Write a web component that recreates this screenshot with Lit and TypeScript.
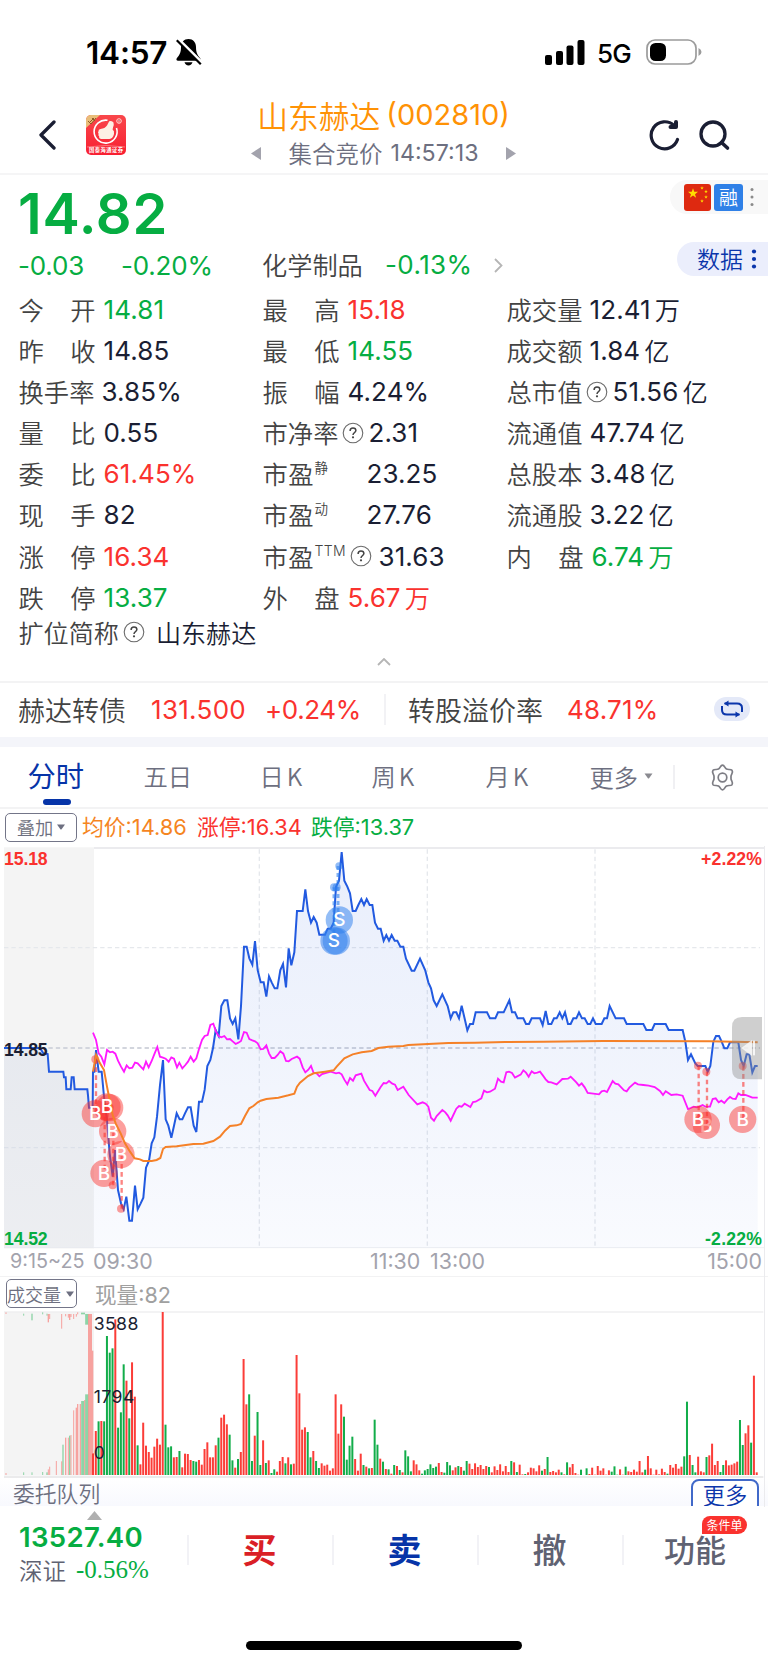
import { LitElement, html, svg, css, nothing } from 'lit';
import { customElement } from 'lit/decorators.js';

type Tone = 'ink' | 'up' | 'down';
interface Stat {
  label: string;
  value: string;
  tone?: Tone;
  unit?: string;
  sup?: string;
  help?: boolean;
}

const TIMES = ['09:30', '11:30', '13:00', '15:00'];

const STATS: (Stat | null)[] = [
  { label: '今开', value: '14.81', tone: 'down' },
  { label: '最高', value: '15.18', tone: 'up' },
  { label: '成交量', value: '12.41', unit: '万' },
  { label: '昨收', value: '14.85' },
  { label: '最低', value: '14.55', tone: 'down' },
  { label: '成交额', value: '1.84', unit: '亿' },
  { label: '换手率', value: '3.85%' },
  { label: '振幅', value: '4.24%' },
  { label: '总市值', value: '51.56', unit: '亿', help: true },
  { label: '量比', value: '0.55' },
  { label: '市净率', value: '2.31', help: true },
  { label: '流通值', value: '47.74', unit: '亿' },
  { label: '委比', value: '61.45%', tone: 'up' },
  { label: '市盈', sup: '静', value: '23.25' },
  { label: '总股本', value: '3.48', unit: '亿' },
  { label: '现手', value: '82' },
  { label: '市盈', sup: '动', value: '27.76' },
  { label: '流通股', value: '3.22', unit: '亿' },
  { label: '涨停', value: '16.34', tone: 'up' },
  { label: '市盈', sup: 'TTM', value: '31.63', help: true },
  { label: '内盘', value: '6.74', unit: '万', tone: 'down' },
  { label: '跌停', value: '13.37', tone: 'down' },
  { label: '外盘', value: '5.67', unit: '万', tone: 'up' },
  null,
];

/* Chart series, in thirds of a pixel. Each segment carries its own x origin. */
const shift = (dx: number, s: string) =>
  s.trim().split(/\s+/).map((p) => {
    const [x, y] = p.split(',').map(Number);
    return `${x + dx},${y}`;
  }).join(' ');

const AUCTION = '12,624 120,624 130,640 143,642 147,695 190,695 192,712 197,712 199,748 212,748 215,712 221,712 224,748 262,748 264,766 267,803 278,803';
const PRICE = [
  shift(0, '279,695 283,695 288,630 296,695 305,695 313,780 321,840 329,940 338,1010 345,930 354,1050 363,1090 371,1108 379,1070 388,1142 396,1142 405,1037 413,1108 422,1090 430,1073 438,983 447,962 455,910 463,892 471,830 480,735 489,660 497,838 505,857 514,893 522,857 530,820 539,838 547,838 555,820 564,802 572,802 581,857 589,876 597,785 606,785 614,749 622,678 631,660 639,624 647,570 656,588 664,498 673,481 682,481 690,535 698,552 706,535 715,598 723,498 732,320 740,320 748,355 757,374'),
  shift(765, '0,303 8,390 17,427 26,427 34,470 42,409 50,427 59,445 67,445 76,390 84,372 93,442 101,325 109,376 118,337 126,213 143,213 151,148 159,213 168,248 176,231 185,248 193,284 210,284 218,266 227,266 236,248 243,140 252,122 260,36 268,122 277,140 285,160 293,213 302,213 310,195 319,177 327,195 335,177 344,195 352,195 360,248 369,266 377,266 386,302 394,285 402,302 410,285 419,302 427,302 436,320 445,320 453,356 470,392 478,392 495,356 511,392 520,427 528,445 536,481 545,498 562,463 578,498 587,535 595,517 604,517 612,535 620,497 637,571 645,552 654,552 662,517 696,517 705,535 721,535 729,517 746,517 763,481'),
  shift(1530, '6,517 15,517 23,535 40,535 48,552 57,552 65,535 90,535 98,555 107,513 115,552 124,552 132,535 140,535 149,517 157,535 165,517 174,552 182,552 190,535 199,535 207,517 216,535 224,535 233,552 241,552 249,535 257,552 275,552 283,535 291,535 299,498 317,535 342,535 350,552 400,552 409,570 426,570 434,552 467,552 476,570 518,570 526,605 534,660 543,643 556,670 563,678 586,678 593,695 601,678 610,605 618,588 627,588 635,605 643,625 652,625 660,607 685,607 693,660 701,678 710,643 718,643 727,697 735,678 743,678'),
].join(' ');
const AVERAGE = [
  shift(0, '279,695 288,645 300,670 312,690 321,740 329,780 338,825 347,850 362,880 375,910 390,935 404,955 420,958 430,963 455,963 470,960 481,954 489,927 497,921 530,919 580,912 610,911 640,903 660,890 675,872 690,858 710,856 723,852 735,828 748,805 760,798'),
  shift(765, '8,787 17,782 34,777 70,773 100,766 118,761 126,740 135,728 159,708 176,700 210,695 236,691 245,680 268,655 293,643 320,637 350,633 370,624 400,620 445,618 460,615 520,612 580,609 660,608 750,606'),
  shift(1530, '100,605 280,603 600,604 743,607'),
].join(' ');
const INDEX = [
  shift(0, '279,578 288,600 296,640 304,650 313,673 321,630 330,637 338,635 346,641 354,662 363,680 372,695 380,676 388,685 397,683 405,668 413,670 422,680 430,688 438,665 446,682 455,663 464,640 472,621 480,650 489,653 497,656 506,665 514,652 522,656 531,682 538,668 547,685 556,675 564,665 572,650 581,665 589,655 597,627 606,600 614,588 623,585 631,555 640,551 648,575 656,588 664,592 673,588 681,598 690,597 698,604 707,612 715,608 723,603 732,576 740,578 748,597 757,601 765,604 773,610'),
  shift(765, '17,628 25,627 34,616 42,640 50,654 59,654 68,645 76,634 85,641 93,663 101,664 110,657 126,650 134,656 143,682 151,697 160,689 168,678 176,699 185,700 193,709 201,702 227,695 243,700 252,698 260,703 268,719 277,733 285,714 294,722 302,706 319,701 327,722 344,750 352,753 361,767 377,741 386,729 394,730 402,723 412,731 420,734 428,750 445,740 461,765 487,793 503,787 512,791 520,800 528,833 537,842 545,828 562,810 571,817 578,826 587,842 595,825 604,806 612,798 620,800 629,791 646,801 654,786 662,785 679,775 687,752 696,757 705,755 720,746 729,716 738,725 746,727 754,697 762,695'),
  shift(1530, '6,699 15,713 32,704 40,691 48,698 56,710 65,694 73,700 82,698 90,695 99,707 107,718 115,726 124,727 140,733 157,717 174,716 182,710 199,727 207,737 215,730 224,742 233,759 267,763 275,754 283,752 291,756 308,723 316,731 325,733 342,751 350,754 358,743 375,728 384,733 400,735 416,737 434,741 450,753 459,765 467,754 484,765 500,763 518,767 534,807 542,804 551,800 560,802 568,800 578,795 586,800 600,800 608,777 617,775 626,787 634,782 643,789 652,778 660,771 668,776 677,777 685,760 693,765 706,765 718,769 727,773 743,773'),
].join(' ');

/* One entry per minute: colour (r rise, g fall) and bar top. */
const VOLUME = `r550 r483 g454 r453 g454 g198 g248 g235 r148 g473 g427 g283 r332 g445 r277 r380 g526 r583 r458 r527 r546 r563 r530 r506 r524 r126
g464 g532 g529 r562 r561 g543 r592 r551 r552 r570 g573 g575 r570 r584 r537 r517 r562 r562 r526 g503 r443 r434 r463 g494 g571 r593 g567 r546
r267 r403 g373 g573 r497 g426 g585 r511 g579 r571 g609 g598 r605 r573 r561 g580 r562 g583 r581 r255 r370 r479 r472 g486 g562 r543 g573 g594
r580 r587 r584 r602 r595 r373 r491 r403 g440 g569 g527 g500 r567 r602 r551 g585 r590 g595 r594 g449 g524 r566 g575 r597 g598 r611 g585 r588
g600 r607 g541 g559 g604 r571 r583 r601 g611 g601 g597 g583 g594 g590 r579 r606 g608 g576 g586 r601 r592 g588 r591 g602 g573 r581 r597 r580
r591 r585 r597 r588 g591 r607 r589 r600 r583 r604 r588 r606 g573 r577 g606 r584 r613 g612 r607 r593 r595 r604 r586 g602 r597 g561 r606 r603
r607 r599 g607 r613 g577 r592 r582 r609 r614 g599 r615 g595 r612 r593 r614 r588 r602 r595 r614 r601 g605 g589 g614 r598 r614 g590 r604 r606
r599 r605 r573 r607 g599 r558 r595 r614 r599 r613 r596 r606 g611 r585 r593 r582 r596 r590 g559 g395 r555 g585 g607 r560 r604 r607 g561 r556
r521 r585 r573 g606 g585 r571 r586 r584 r580 r575 g450 g525 r490 r466 g518 r317 r607`.trim().split(/\s+/);

/* Call auction bars: colour, x, top, bottom, width. */
const AUCTION_BARS: [string, number, number, number, number][] = [
  ['r', 18, 127, 132, 3], ['g', 71, 131, 137, 3], ['g', 96, 131, 151, 4], ['g', 128, 127, 133, 3], ['g', 141, 131, 137, 3],
  ['r', 145, 132, 157, 4], ['r', 149, 132, 147, 3], ['r', 185, 132, 176, 3], ['r', 197, 132, 139, 3], ['r', 205, 132, 143, 3],
  ['r', 209, 132, 150, 4], ['r', 213, 132, 141, 3], ['r', 221, 132, 147, 3], ['r', 229, 132, 140, 3], ['r', 233, 127, 133, 3],
  ['g', 249, 128, 133, 12], ['g', 260, 132, 164, 9], ['r', 270, 132, 615, 12], ['r', 278, 242, 550, 4],
  ['r', 18, 609, 615, 3], ['g', 71, 607, 615, 3], ['g', 96, 607, 615, 3], ['g', 128, 606, 615, 3], ['g', 141, 607, 615, 4],
  ['r', 145, 598, 615, 3], ['r', 149, 590, 615, 3], ['r', 169, 573, 615, 3], ['r', 185, 574, 615, 3], ['g', 189, 524, 615, 4],
  ['r', 197, 503, 615, 4], ['r', 205, 503, 615, 3], ['g', 209, 497, 615, 4], ['r', 213, 495, 615, 3], ['r', 221, 421, 615, 3],
  ['r', 229, 413, 615, 4], ['r', 233, 402, 615, 4], ['r', 241, 402, 615, 4], ['g', 248, 393, 615, 9], ['r', 254, 390, 615, 3],
  ['g', 260, 373, 615, 9],
];

/* Trades, bottom of the stack first: letter, x, marker y, anchor y. */
const TRADES: [string, number, number, number][] = [
  ['', 329, 803, 803], ['', 286, 821, 658], ['', 321, 801, 801], ['B', 338, 874, 1036],
  ['', 363, 944, 1106], ['', 312, 1000, 830],
  ['B', 2119, 856, 695], ['', 2094, 838, 677], ['', 2228, 838, 678],
];
/* Letters that stay above every marker. */
const LETTERS: [string, number, number][] = [
  ['B', 286, 821], ['B', 321, 801], ['B', 363, 944], ['B', 312, 1000], ['B', 2094, 838], ['B', 2228, 838],
];

@customElement('app-root')
export class AppRoot extends LitElement {
  static styles = css`
    :host { display: block; width: 768px; height: 1665px; overflow: hidden; background: #fff; color: #1a1e33;
      font-family: Inter, "Noto Sans CJK SC", sans-serif; font-size: 26px; white-space: nowrap; }
    * { box-sizing: border-box; }
    svg { display: block; flex: none; }
    .up { color: #fa322e; } .down { color: #06ad42; } .ink { color: #1a1e33; }
    .cjk { font-family: "Noto Sans CJK SC", sans-serif; font-weight: 350; }

    .status { height: 94px; display: flex; align-items: center; padding: 10px 66px 0 86px; color: #000; }
    .clock { font-size: 31.5px; font-weight: 600; letter-spacing: -0.2px; width: 90px; }
    .net { font-size: 26px; font-weight: 500; margin: 2px 14px 0 12px; letter-spacing: -0.8px; width: 35px; }
    .grow { flex: 1; }

    .head { height: 81px; display: grid; align-items: center; border-bottom: 2px solid #f5f5f6; padding-top: 2px; grid-template-columns: 39px 47px 40px 522px 51px 69px; }
    .title { display: flex; flex-direction: column; align-items: center; margin-left: -7px; }
    .name { color: #ff9205; font-size: 29px; line-height: 40px; margin-top: -5px; display: flex; gap: 6px; }
    .name .cjk { font-size: 30.8px; }
    .phase { color: #6d6f80; font-size: 23.2px; line-height: 32px; display: flex; align-items: center; gap: 8px; margin-top: 2px; }
    .phase .cjk { font-size: 23.5px; }
    .phase .prev { margin-right: 20px; } .phase .next { margin-left: 20px; }

    .summary { height: 508px; border-bottom: 2px solid #f3f3f4; }
    .quote { height: 114px; display: grid; grid-template-columns: 262px 415px 91px; }
    .last { font-size: 56px; font-weight: 600; line-height: 79px; padding-left: 18px; letter-spacing: 0.8px; }
    .moves { display: flex; padding-left: 18px; line-height: 32px; margin-top: -4px; gap: 37px; letter-spacing: -0.2px; }
    .sector { align-self: end; display: flex; line-height: 32px; padding-bottom: 8px; align-items: center; }
    .sector .cjk { font-size: 25.2px; color: #434343; width: 123px; margin-top: -3px; }
    .sector .down { letter-spacing: 0.4px; width: 109px; }
    .tools { display: flex; flex-direction: column; align-items: flex-end; }
    .flags { margin-top: 5px; width: 98px; height: 34px; border-radius: 17px 0 0 17px; background: #f8f8f8; display: flex; align-items: center; padding-left: 14px; gap: 3px; }
    .margin { width: 29px; height: 27px; border-radius: 3px; background: #2f80e7; color: #fff; font-size: 19px; line-height: 26px; text-align: center; }
    .flags .dots { margin-left: 3px; }
    .data { margin-top: 28px; width: 91px; height: 34px; border-radius: 17px 0 0 17px; background: #ebeefc; color: #0b36ab; font-size: 23px; display: flex; align-items: center; padding-left: 20px; gap: 8px; line-height: 31px; }
    .data span { margin-top: -2px; }

    .stats { display: grid; grid-template-columns: 244px 244px 1fr; grid-auto-rows: 41.1px; padding-left: 18.5px; }
    .stat { display: flex; align-items: center; height: 41px; }
    .label { font-size: 25.3px; color: #434343; display: flex; justify-content: space-between; margin-top: -1px; }
    .l2 { width: 77px; margin-right: 8px; } .l3 { width: 76px; margin-right: 7px; } .ls { width: 51px; }
    .sup { font-size: 13.5px; color: #434343; align-self: flex-start; line-height: 20px; margin: 4px 0 0 1px; width: 52px; }
    .ttm { width: 39px; font-family: Inter, sans-serif; font-size: 14px; letter-spacing: 0.4px; margin-top: 5px; }
    .val { letter-spacing: 0.1px; }
    .unit { font-size: 25.3px; margin-left: 4px; margin-top: -1px; }
    .help { margin: 0 5px 0 -4px; }
    .ttm + .help { margin-left: -4px; margin-right: 7px; }
    .alias { display: flex; align-items: center; height: 30px; padding-left: 18.5px; font-size: 25.1px; margin-top: -1px; }
    .alias .k { color: #434343; }
    .alias .help { margin: 0 11px 0 4px; }
    .fold { display: flex; justify-content: center; padding-top: 11px; }

    .bond { height: 54px; display: flex; align-items: center; padding: 0 0 2px 18px; font-size: 26px; }
    .bond .cjk { font-size: 27px; color: #434343; }
    .b1 { margin-left: 25px; width: 114px; letter-spacing: 0.3px; } .b2 { width: 119px; letter-spacing: -0.4px; }
    .bsep { width: 2px; height: 31px; background: #f2f2f5; margin-right: 22px; }
    .b3 { margin-left: 24px; width: 147px; letter-spacing: 0.2px; }
    .swap { width: 36px; height: 24px; border-radius: 12px; background: #e4e9f8; display: flex; align-items: center; justify-content: center; }
    .band { height: 10px; background: #f4f5fa; }

    .tabs { height: 62px; display: grid; grid-template-columns: 116px 116px 112px 114px 104px 83px 36px 1fr; align-items: center; border-bottom: 2px solid #f3f3f4; font-size: 24.3px; color: #6d6f80; padding-left: 27.5px; }
    .tab { height: 60px; line-height: 58px; }
    .on { color: #0634a8; font-size: 28.3px; font-weight: 400; display: flex; flex-direction: column; line-height: 56px; }
    .on::after { content: ""; width: 28px; height: 6px; border-radius: 3px; background: #0634a8; margin-top: -4px; margin-left: 15px; }
    .duo { display: flex; gap: 3px; }
    .more { display: flex; align-items: center; gap: 6px; padding-bottom: 2px; }
    .tsep { width: 2px; height: 24px; background: #f0f0f3; }

    .legend { height: 37px; display: flex; align-items: center; padding-left: 5px; font-size: 21.8px; padding-bottom: 1px; }
    .pick { border: 1.5px solid #737588; border-radius: 5px; height: 29px; width: 72px; display: flex; align-items: center; justify-content: center; gap: 4px; font-size: 18.3px; color: #6d6f80; line-height: 26px; }
    .legend .i1 { margin-left: 5px; width: 115px; color: #f5851f; } .legend .i2 { width: 114px; }
    .legend span:not(.pick) { margin-top: -3px; }
    .frame { position: relative; height: 661px; overflow: hidden; }
    .frame::after { content: ""; position: absolute; left: 763.5px; top: 0; width: 1.5px; height: 661px; background: #ebebee; }
    .axis { height: 27px; display: flex; padding: 0 6px 0 10px; font-size: 21.4px; line-height: 25px; color: #a3a3ad; }
    .axis .pre { font-size: 19.8px; width: 83px; }
    .axis .t0 { width: 277px; } .axis .t1 { width: 60px; } .axis .t3 { margin-left: auto; }
    .vbar { height: 35px; display: flex; align-items: center; padding-left: 6px; border-top: 1px solid #f2f2f3; }
    .vbar .pick { margin-top: -1px; justify-content: flex-start; gap: 5px; font-size: 18px; width: 71px; }
    .now { color: #a0a0a0; font-size: 21.6px; margin: -2px 0 0 18px; }
    .queue { height: 28px; overflow: hidden; display: flex; align-items: flex-start; justify-content: space-between; padding: 0 9px 0 13px; background: linear-gradient(#fff, #f8f9fe); color: #6d6f80; font-size: 21.8px; line-height: 30px; }
    .qmore { border: 2px solid #4169c9; border-radius: 8px; width: 68px; height: 34px; margin-top: 1px; text-align: center; color: #0b36ab; font-size: 22.3px; line-height: 26px; background: #fff; }

    .bar { height: 133px; display: grid; grid-template-columns: 188px 145px 145px 145px 1fr; margin-left: -1px; }
    .index { padding: 4px 0 0 20px; }
    .index svg { margin-left: 68px; }
    .points { font-size: 27.6px; font-weight: 600; line-height: 32px; letter-spacing: 0.3px; margin-top: 1px; }
    .sz { display: flex; align-items: center; font-size: 23.5px; color: #5f6272; line-height: 34px; gap: 10px; }
    .sz .pct { font-family: "Liberation Serif", serif; font-size: 25px; color: #06ad42; }
    .act { height: 90px; line-height: 83px; text-align: center; font-size: 34px; position: relative; }
    .act::before { content: ""; position: absolute; left: 0; top: 28px; width: 1.5px; height: 30px; background: #f2f2f6; }
    .buy { color: #da1f26; font-weight: 700; } .sell { color: #0634a8; font-weight: 700; } .gray { color: #5f6272; font-weight: 500; }
    .fn { font-size: 31px; }
    .badge { position: absolute; left: 80px; top: 9px; width: 45px; height: 18px; border-radius: 8px 9px 9px 0; background: #fa322e; color: #fff; font-size: 12px; line-height: 17px; font-weight: 400; }
    .home { height: 25px; display: flex; justify-content: center; padding-top: 1px; }
    .home i { width: 276px; height: 9px; border-radius: 5px; background: #000; }
  `;

  private help() {
    return html`<svg class="help" width="22" height="22" viewBox="0 0 22 22"><circle cx="11" cy="11" r="9.8" fill="none" stroke="#6a6a6a" stroke-width="1.1"/><path d="M8.1 9c0-1.8 1.2-3 2.9-3s2.9 1.100 2.900 2.600c0 2-2.900 2.200-2.900 4.300" fill="none" stroke="#434343" stroke-width="1.500"/><circle cx="11" cy="15.300" r="1.100" fill="#434343"/></svg>`;
  }
  private tri(c = '#6d6f80', w = 8) {
    return html`<svg width=${w} height="6" viewBox="0 0 8 6"><path d="M0 .5h8L4.600 5.200q-.600.600-1.200 0z" fill=${c}/></svg>`;
  }
  private dots(c: string, r: number) {
    return html`<svg class="dots" width="6" height="22" viewBox="0 0 6 22"><circle cx="3" cy="3.500" r=${r} fill=${c}/><circle cx="3" cy="11" r=${r} fill=${c}/><circle cx="3" cy="18.500" r=${r} fill=${c}/></svg>`;
  }
  private stat(s: Stat | null) {
    if (!s) return html`<div></div>`;
    const kind = s.sup ? 'ls' : s.label.length === 2 ? 'l2' : 'l3';
    const tone = s.tone ?? 'ink';
    return html`<div class="stat">
      <span class="label cjk ${kind}">${[...s.label].map((c) => html`<span>${c}</span>`)}</span>
      ${s.sup ? html`<span class="sup cjk ${s.sup === 'TTM' ? 'ttm' : ''}">${s.sup}</span>` : nothing}
      ${s.help ? this.help() : nothing}
      <span class="val ${tone}">${s.value}</span>
      ${s.unit ? html`<span class="unit cjk ${tone}">${s.unit}</span>` : nothing}
    </div>`;
  }
  private star(cx: number, cy: number, r: number) {
    const p = Array.from({ length: 10 }, (_, i) => {
      const a = -Math.PI / 2 + (i * Math.PI) / 5;
      const q = i % 2 ? r * 0.4 : r;
      return `${(cx + q * Math.cos(a)).toFixed(2)},${(cy + q * Math.sin(a)).toFixed(2)}`;
    }).join(' ');
    return svg`<polygon points=${p} fill="#ffde00"/>`;
  }
  private logo() {
    return html`<svg width="40" height="40" viewBox="0 0 40 40">
      <defs><linearGradient id="lg" x2="0" y2="1"><stop stop-color="#f9474b"/><stop offset="1" stop-color="#f81f31"/></linearGradient>
      <clipPath id="lc"><rect width="40" height="40" rx="5"/></clipPath></defs>
      <g clip-path="url(#lc)"><rect width="40" height="40" fill="url(#lg)"/>
        <path d="M0 0h14L0 13z" fill="#e9bd79"/>
        <path d="M3 8l5-5M5 9l5-6M2 6l3 3M6 3l3 3" stroke="#8c5a26" stroke-width="1"/>
        <path d="M21.500 5.300A11.500 11.500 0 1 0 30.500 13" fill="none" stroke="#fff" stroke-width="1.600"/>
        <path d="M14.500 14q4.500-.5 6.500-3.500l2.200-4.200q2.800-1.200 4.300 1.300.800 2.600-.500 5l-.4 2q2 1.500 1.400 4.400-1 4.500-4.500 5h-8q-2.800-.5-2.300-2.500-1.400-1.200-.600-2.700-1.100-1.300-.1-2.500-.400-1.800 2-2.300z" fill="#fdf0e4"/>
        <circle cx="33" cy="6" r="2.300" fill="none" stroke="#ffd9d4" stroke-width="1"/><path d="M32 5l1 1.200L34 5M33 6v1.800" stroke="#ffd9d4" stroke-width=".7"/>
        <path d="M1 32q19-3 38 0" stroke="#fb8b8d" stroke-width=".8" fill="none"/>
        <text x="3" y="37.300" font-size="5.300" font-weight="700" fill="#fff" textLength="34" font-family="Noto Sans CJK SC">国泰海通证券</text>
      </g></svg>`;
  }

  private priceChart() {
    const dash = (d: string, c: string, w: number) => svg`<path d=${d} stroke=${c} stroke-width=${w} stroke-dasharray="13 9.200" fill="none"/>`;
    return html`<svg width="768" height="403" viewBox="0 18 2304 1209">
      <defs>
        <linearGradient id="fade" gradientUnits="userSpaceOnUse" x1="0" y1="30" x2="0" y2="1224"><stop stop-color="#3868e0" stop-opacity=".11"/><stop offset=".5" stop-color="#3868e0" stop-opacity=".075"/><stop offset="1" stop-color="#3868e0" stop-opacity=".03"/></linearGradient>
        <linearGradient id="fadeA" gradientUnits="userSpaceOnUse" x1="0" y1="620" x2="0" y2="1224"><stop stop-color="#3a5fb0" stop-opacity=".07"/><stop offset="1" stop-color="#3a5fb0" stop-opacity=".04"/></linearGradient>
      </defs>
      <rect x="12" y="22" width="270" height="1203" fill="#f4f4f4"/>
      <path d="M282 24H2292" stroke="#e4e5e9" stroke-width="4"/>
      <path d="M12 1223H2292" stroke="#eff0f2" stroke-width="3"/>
      ${dash('M12 323H2280M12 923H2280', '#e5e8ec', 4)}
      ${dash('M12 624H2280', '#d2d5dd', 6)}
      ${dash('M778 28V1222M1282 28V1222M1785 28V1222', '#e5e8ec', 4)}
      <polygon points="12,1224 ${AUCTION} 279,1224" fill="url(#fadeA)"/>
      <polygon points="279,1224 ${PRICE} 2273,1224" fill="url(#fade)"/>
      <g fill="none" stroke-linejoin="miter" stroke-width="6">
        <polyline points="${AUCTION} ${PRICE}" stroke="#225ae0"/>
        <polyline points=${INDEX} stroke="#ff19ff" stroke-width="5.500"/>
      </g>
      <g stroke="#fa322e" stroke-opacity=".6" stroke-width="7" stroke-dasharray="14 10">
        ${TRADES.map(([, x, y, a]) => svg`<path d="M${x + 2} ${a}V${y}"/>`)}
      </g>
      <g fill="#fa322e" fill-opacity=".48">
        ${TRADES.map(([, x, , a]) => svg`<circle cx=${x} cy=${a} r="12"/>`)}
      </g>
      ${TRADES.map(([s, x, y]) => svg`<circle cx=${x} cy=${y} r="41" fill="#fa322e" fill-opacity=".47"/>${s ? svg`<text x=${x} y=${y + 19} class="side">${s}</text>` : nothing}`)}
      <polyline points=${AVERAGE} stroke="#f58128" stroke-width="6" fill="none"/>
      ${LETTERS.map(([s, x, y]) => svg`<text x=${x} y=${y + 19} class="side">${s}</text>`)}
      <g stroke="#2f80ed" stroke-opacity=".6" stroke-width="9" stroke-dasharray="12 9"><path d="M1002 142V300M1014 78V240"/></g>
      <g fill="#2f80ed" fill-opacity=".52">
        <circle cx="1017" cy="78" r="11"/><circle cx="1002" cy="142" r="12"/><circle cx="1010" cy="142" r="12"/>
        <circle cx="1018" cy="240" r="41"/><circle cx="1002" cy="303" r="41"/><circle cx="1009" cy="303" r="41"/>
      </g>
      <text x="1018" y="259" class="side">S</text><text x="1002" y="321" class="side">S</text>
      <path d="M2286 531H2226Q2196 531 2196 561V688Q2196 718 2226 718H2286Z" fill="#8c8c8c" fill-opacity=".42"/>
      <path d="M2224 624L2256 600V648Z" fill="#fff" fill-opacity=".75"/><rect x="2259" y="602" width="6" height="44" fill="#fff" fill-opacity=".8"/>
      <text x="12" y="74" textLength="131" fill="#fa322e" class="t">15.18</text>
      <text x="12" y="648" textLength="131" fill="#1a1e33" class="t">14.85</text>
      <text x="12" y="1215" textLength="131" fill="#06ad42" class="t">14.52</text>
      <text x="2103" y="75" textLength="183" fill="#fa322e" class="t">+2.22%</text>
      <text x="2115" y="1215" textLength="171" fill="#06ad42" class="t">-2.22%</text>
      <style>.t{font:700 53px "Liberation Sans",sans-serif}.side{font:500 57px Inter,sans-serif;fill:#fff;text-anchor:middle}</style>
    </svg>`;
  }
  private volumeChart() {
    const col = (c: string) => (c === 'r' ? '#fb3d38' : '#12ad4a');
    return html`<svg width="768" height="167" viewBox="0 123 2304 501">
      <rect x="12" y="126" width="270" height="491" fill="#f4f4f4"/>
      <path d="M12 126H2290" stroke="#efeff0" stroke-width="4"/>
      ${AUCTION_BARS.map(([c, x, t, b, w]) => svg`<rect x=${x - w / 2} y=${t} width=${w} height=${b - t} fill=${col(c)} opacity=".45"/>`)}
      ${VOLUME.map((v, i) => svg`<rect x=${279 + i * 8.366 - 3} y=${v.slice(1)} width="6" height=${615 - Number(v.slice(1))} fill=${col(v[0])}/>`)}
      <path d="M12 621H2290" stroke="#e4e4e6" stroke-width="5"/>
      <text class="v" x="281" y="180" textLength="134">3588</text><text class="v" x="281" y="399" textLength="122">1794</text><text class="v" x="281" y="566">0</text>
      <style>.v{font:400 53px Inter,sans-serif;fill:#1a1e33}</style>
    </svg>`;
  }

  render() {
    return html`
      <div class="status">
        <span class="clock">14:57</span>
        <svg width="26" height="28" viewBox="0 0 26 28"><path d="M12.500 1c4.500 0 7.500 3.300 7.500 8 0 5.500 1.500 8.200 4.200 11.200.8 1 .3 2.600-1.200 2.600H2c-1.500 0-2-1.600-1.200-2.600C3.500 17.200 5 14.500 5 9c0-4.700 3-8 7.500-8zM8.500 24.200h8c-.5 2-2 3.200-4 3.200s-3.500-1.200-4-3.200z"/><path d="M2.500 1.200L26 24.700" stroke="#fff" stroke-width="3"/><path d="M.8 2.300L24.800 26.300" stroke="#000" stroke-width="2.200"/></svg>
        <span class="grow"></span>
        <svg width="40" height="25" viewBox="0 0 40 25"><rect x="0" y="15" width="7" height="10" rx="2"/><rect x="11" y="11" width="7" height="14" rx="2"/><rect x="21.500" y="5.500" width="7" height="19.500" rx="2"/><rect x="32.500" y="0" width="7" height="25" rx="2"/></svg>
        <span class="net">5G</span>
        <svg width="56" height="26" viewBox="0 0 56 26"><rect x="1" y="1" width="49" height="24" rx="8" fill="none" stroke="#9b9b9b" stroke-width="1.700"/><rect x="4" y="4" width="16" height="18" rx="5.500"/><path d="M52.500 9v8q3-1.300 3-4t-3-4z" fill="#9b9b9b"/></svg>
      </div>
      <div class="head">
        <span></span>
        <svg width="18" height="30" viewBox="0 0 18 30"><path d="M15 2L2 15l13 13" fill="none" stroke="#1a1e33" stroke-width="3.300" stroke-linecap="round" stroke-linejoin="round"/></svg>
        ${this.logo()}
        <div class="title">
          <div class="name"><span class="cjk">山东赫达</span><span>(002810)</span></div>
          <div class="phase"><svg class="prev" width="10" height="13" viewBox="0 0 10 13"><path d="M10 0v13L0 6.500z" fill="#a3a3ad"/></svg><span class="cjk">集合竞价</span><span>14:57:13</span><svg class="next" width="10" height="13" viewBox="0 0 10 13"><path d="M0 0v13l10-6.500z" fill="#a3a3ad"/></svg></div>
        </div>
        <svg width="32" height="32" viewBox="0 0 32 32"><path d="M29.500 20.500A13.500 13.500 0 1 1 26 6.500" fill="none" stroke="#1a1e33" stroke-width="3.200" stroke-linecap="round"/><path d="M22.500 8h5.500V3" fill="none" stroke="#1a1e33" stroke-width="4" stroke-linejoin="round" stroke-linecap="round"/></svg>
        <svg width="32" height="32" viewBox="0 0 32 32"><circle cx="14" cy="15" r="12" fill="none" stroke="#1a1e33" stroke-width="3.300"/><path d="M22.500 23.500l6 5.500" stroke="#1a1e33" stroke-width="3.600" stroke-linecap="round"/></svg>
      </div>

      <div class="summary">
        <div class="quote">
          <div><div class="last down">14.82</div><div class="moves down"><span>-0.03</span><span>-0.20%</span></div></div>
          <div class="sector"><span class="cjk">化学制品</span><span class="down">-0.13%</span><svg width="9" height="15" viewBox="0 0 9 15"><path d="M1 1l6.500 6.500L1 14" fill="none" stroke="#b5b5b5" stroke-width="1.800"/></svg></div>
          <div class="tools">
            <div class="flags"><svg width="27" height="27" viewBox="0 0 27 27"><rect width="27" height="27" rx="3" fill="#de2910"/>${this.star(9, 9.500, 5.300)}${this.star(18, 4, 1.900)}${this.star(22, 7.500, 1.900)}${this.star(22, 13, 1.900)}${this.star(18, 17, 1.900)}</svg><span class="margin cjk">融</span>${this.dots('#8a8a8a', 1.5)}</div>
            <div class="data cjk"><span>数据</span>${this.dots('#0b36ab', 2.1)}</div>
          </div>
        </div>
        <div class="stats">${STATS.map((s) => this.stat(s))}</div>
        <div class="alias cjk"><span class="k">扩位简称</span>${this.help()}<span>山东赫达</span></div>
        <div class="fold"><svg width="14" height="8" viewBox="0 0 14 8"><path d="M1 7l6-6 6 6" fill="none" stroke="#b5b5b5" stroke-width="1.800"/></svg></div>
      </div>

      <div class="bond"><span class="cjk">赫达转债</span><span class="up b1">131.500</span><span class="up b2">+0.24%</span><span class="bsep"></span><span class="cjk">转股溢价率</span><span class="up b3">48.71%</span>
        <span class="swap"><svg width="24" height="18" viewBox="0 0 24 18"><path d="M4.500 3.500H17q5 0 5 4.500v4M19.500 14.500H7q-5 0-5-4.500V6" fill="none" stroke="#0b36ab" stroke-width="2"/><path d="M4 3.500L8.500.5v6zM20 14.500l-4.500-3v6z" fill="#0b36ab"/></svg></span></div>
      <div class="band"></div>

      <div class="tabs cjk">
        <span class="tab on">分时</span><span class="tab">五日</span><span class="tab duo"><span>日</span><span>K</span></span><span class="tab duo"><span>周</span><span>K</span></span><span class="tab duo"><span>月</span><span>K</span></span><span class="more">更多${this.tri('#8a8a90', 9)}</span><span class="tsep"></span>
        <svg width="27" height="27" viewBox="0 0 27 27"><path d="M13.500 1.200c2 0 2.300 3 4 3.900s4.300-.3 5.500 1.200c1.600 2.300-1 3.900-1 5.900v2.600c0 2 2.600 3.600 1 5.900-1.200 1.500-3.800.3-5.500 1.200s-2 3.900-4 3.900-2.300-3-4-3.900-4.300.3-5.500-1.200c-1.600-2.300 1-3.900 1-5.900v-2.600c0-2-2.600-3.600-1-5.900 1.200-1.500 3.800-.3 5.500-1.200s2-3.900 4-3.900z" fill="none" stroke="#7d7d84" stroke-width="1.700"/><circle cx="13.500" cy="13.500" r="4.300" fill="none" stroke="#7d7d84" stroke-width="1.700"/></svg>
      </div>
      <div class="legend"><span class="pick cjk">叠加${this.tri()}</span><span class="i1">均价:14.86</span><span class="i2 up">涨停:16.34</span><span class="down">跌停:13.37</span></div>

      <div class="frame">
        ${this.priceChart()}
        <div class="axis"><span class="pre">9:15~25</span>${TIMES.map((t, i) => html`<span class="t${i}">${t}</span>`)}</div>
        <div class="vbar"><span class="pick cjk">成交量${this.tri()}</span><span class="now">现量:82</span></div>
        ${this.volumeChart()}
        <div class="queue cjk"><span>委托队列</span><span class="qmore">更多</span></div>
      </div>

      <div class="bar">
        <div class="index"><svg width="15" height="9" viewBox="0 0 15 9"><path d="M7.500 0L15 9H0z" fill="#b0b0b0"/></svg><div class="points down">13527.40</div><div class="sz"><span class="cjk">深证</span><span class="pct">-0.56%</span></div></div>
        <div class="act cjk buy">买</div><div class="act cjk sell">卖</div><div class="act cjk gray">撤</div>
        <div class="act cjk gray fn">功能<span class="badge">条件单</span></div>
      </div>
      <div class="home"><i></i></div>
    `;
  }
}
